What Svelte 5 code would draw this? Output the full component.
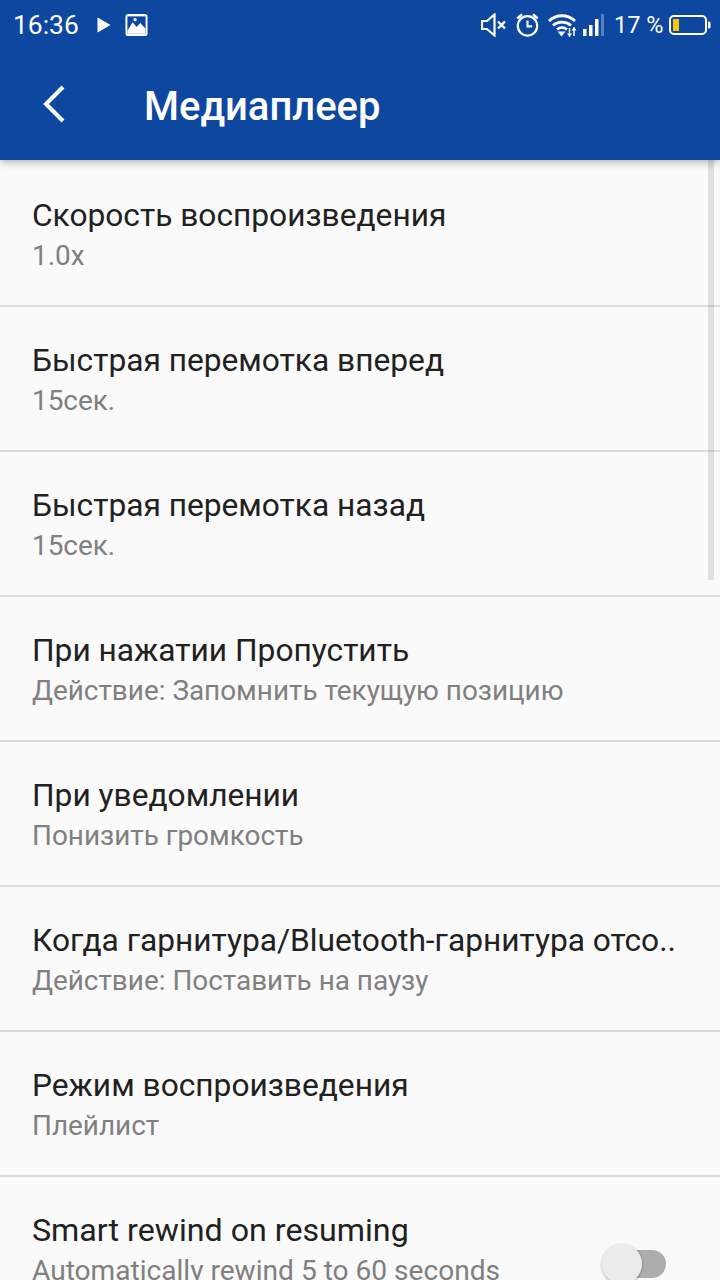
<script>
  let rows = [
    { title: "Скорость воспроизведения", sub: "1.0x" },
    { title: "Быстрая перемотка вперед", sub: "15сек." },
    { title: "Быстрая перемотка назад", sub: "15сек." },
    { title: "При нажатии Пропустить", sub: "Действие: Запомнить текущую позицию" },
    { title: "При уведомлении", sub: "Понизить громкость" },
    { title: "Когда гарнитура/Bluetooth-гарнитура отсо..", sub: "Действие: Поставить на паузу" },
    { title: "Режим воспроизведения", sub: "Плейлист" },
    { title: "Smart rewind on resuming", sub: "Automatically rewind 5 to 60 seconds", toggle: true }
  ];
</script>

<div class="screen">
  <header>
    <div class="status">
      <span class="time">16:36</span>
      <svg class="play" width="14" height="16" viewBox="0 0 14 16"><path d="M0.5 0.5 L13.5 8 L0.5 15.5 Z" fill="#fff"/></svg>
      <svg class="pic" width="23" height="24" viewBox="0 0 24 24">
        <rect x="0.5" y="0.5" width="23" height="23" rx="3" fill="#fff"/>
        <rect x="2.5" y="3" width="19" height="18" fill="#0e479f"/>
        <path d="M2.5 18 L8 9 L12 14 L16 10 L21.5 16 V21 H2.5 Z" fill="#fff"/>
        <circle cx="10.5" cy="6.5" r="1.7" fill="#fff"/>
      </svg>
      <span class="spacer"></span>
      <svg class="mute" width="26" height="24" viewBox="0 0 26 24" fill="none" stroke="#fff" stroke-width="2.2">
        <path d="M1 8 H6 L13.500 1.500 V22.500 L6 16 H1 Z"/>
        <path d="M17 8.500 L24 15.500 M24 8.500 L17 15.500" stroke-width="2.400"/>
      </svg>
      <svg class="alarm" width="23" height="24" viewBox="0 0 24 26" fill="none" stroke="#fff">
        <circle cx="12" cy="14" r="10.500" stroke-width="2.400"/>
        <path d="M12 8 V14.5 H17" stroke-width="2.200"/>
        <path d="M1 6 L6 1.5 M23 6 L18 1.5" stroke-width="2.800"/>
      </svg>
      <svg class="wifi" width="29" height="24" viewBox="0 0 29 24" fill="none" stroke="#fff" stroke-width="2.800">
        <path d="M1 8 C8 1 20 1 27 8"/>
        <path d="M5 12.5 C10 8 18 8 23 12.5"/>
        <path d="M9 16.5 C12 14 16 14 19 16.5"/>
        <path d="M9.5 18.500 H17.500 L13.500 23.500 Z" fill="#fff" stroke="none"/>
        <path d="M21.500 15 V23.500 M26 14.500 V23" stroke-width="1.500"/>
        <path d="M19 20.500 L21.500 24 L24 20.500 Z M23.500 17.500 L26 14 L28.500 17.500 Z" fill="#fff" stroke="none"/>
      </svg>
      <svg class="signal" width="21" height="22" viewBox="0 0 21 22">
        <rect x="0" y="15" width="3.500" height="7" fill="#fff"/>
        <rect x="6" y="11" width="3.500" height="11" fill="#fff"/>
        <rect x="12" y="5" width="3.500" height="17" fill="#fff"/>
        <rect x="18" y="0" width="3" height="22" fill="#fff" opacity="0.3"/>
      </svg>
      <span class="pct">17 %</span>
      <svg class="battery" width="42" height="20" viewBox="0 0 42 20">
        <rect x="1" y="1" width="36" height="18" rx="4" fill="none" stroke="#fff" stroke-width="2"/>
        <rect x="4" y="4" width="6" height="12" fill="#fcc30f"/>
        <path d="M39 6.500 H40 Q41.500 6.500 41.500 8 V12 Q41.500 13.500 40 13.500 H39 Z" fill="#fff"/>
      </svg>
    </div>
    <div class="bar">
      <svg class="back" width="24" height="38" viewBox="0 0 24 38" fill="none" stroke="#fff" stroke-width="4">
        <path d="M21 2 L4 19 L21 36"/>
      </svg>
      <h1>Медиаплеер</h1>
    </div>
  </header>

  <div class="list">
    {#each rows as row}
      <div class="row" class:tall={row.toggle}>
        <div class="texts">
          <div class="title" class:latin={row.toggle}>{row.title}</div>
          <div class="sub" class:latin={row.toggle}>{row.sub}</div>
        </div>
        {#if row.toggle}
          <div class="toggle"><div class="thumb"></div></div>
        {/if}
      </div>
    {/each}
  </div>

  <div class="scrollbar"></div>
</div>

<style>
  :global(body) {
    margin: 0;
    background: #fafafa;
  }

  .screen {
    position: relative;
    width: 720px;
    height: 1280px;
    overflow: hidden;
    background: #fafafa;
    font-family: Roboto, "Noto Sans", sans-serif;
  }

  header {
    position: relative;
    z-index: 1;
    height: 160px;
    background: #0e479f;
    color: #fff;
    box-shadow: 0 2px 8px rgba(0, 0, 0, 0.3);
  }

  .status {
    display: flex;
    align-items: center;
    height: 50px;
    padding: 0 9px 0 13px;
  }

  .time {
    font-size: 26.4px;
    width: 84px;
  }

  .play {
    margin-right: 14px;
  }

  .spacer {
    flex: 1;
  }

  .mute {
    margin-right: 9px;
  }

  .alarm {
    margin-right: 9px;
  }

  .wifi {
    margin-right: 6px;
  }

  .signal {
    margin-right: 10px;
  }

  .pct {
    font-size: 23.5px;
    width: 48px;
    margin-right: 7px;
    white-space: nowrap;
  }

  .bar {
    display: flex;
    align-items: center;
    height: 108px;
    padding-left: 42px;
  }

  .back {
    margin-right: 78px;
  }

  h1 {
    margin: 4px 0 0;
    font-size: 40px;
    font-weight: 500;
  }

  .row {
    box-sizing: border-box;
    display: flex;
    align-items: flex-start;
    height: 145px;
    padding: 33px 48px 0 32px;
    border-bottom: 2px solid #dcdcdc;
  }

  .row:first-child {
    height: 147px;
    padding-top: 35px;
  }

  .row.tall {
    height: 175px;
  }

  .texts {
    flex: 1;
    min-width: 0;
  }

  .title {
    font-size: 31.7px;
    color: #212121;
    line-height: 41px;
    white-space: nowrap;
  }

  .title.latin {
    font-size: 32.2px;
  }

  .sub {
    font-size: 27.9px;
    color: #808080;
    line-height: 40px;
    white-space: nowrap;
  }

  .sub.latin {
    font-size: 28.1px;
  }

  .toggle {
    position: relative;
    flex: none;
    align-self: center;
    width: 58px;
    height: 28px;
    border-radius: 14px;
    background: #adadad;
    margin-top: -33px;
    margin-left: 20px;
    margin-right: 6px;
  }

  .thumb {
    position: absolute;
    left: -6px;
    top: -6px;
    width: 40px;
    height: 40px;
    border-radius: 50%;
    background: #ececec;
    box-shadow: 0 1px 3px rgba(0, 0, 0, 0.3);
  }

  .scrollbar {
    position: absolute;
    left: 708px;
    top: 160px;
    width: 6px;
    height: 420px;
    background: rgba(0, 0, 0, 0.1);
  }
</style>
